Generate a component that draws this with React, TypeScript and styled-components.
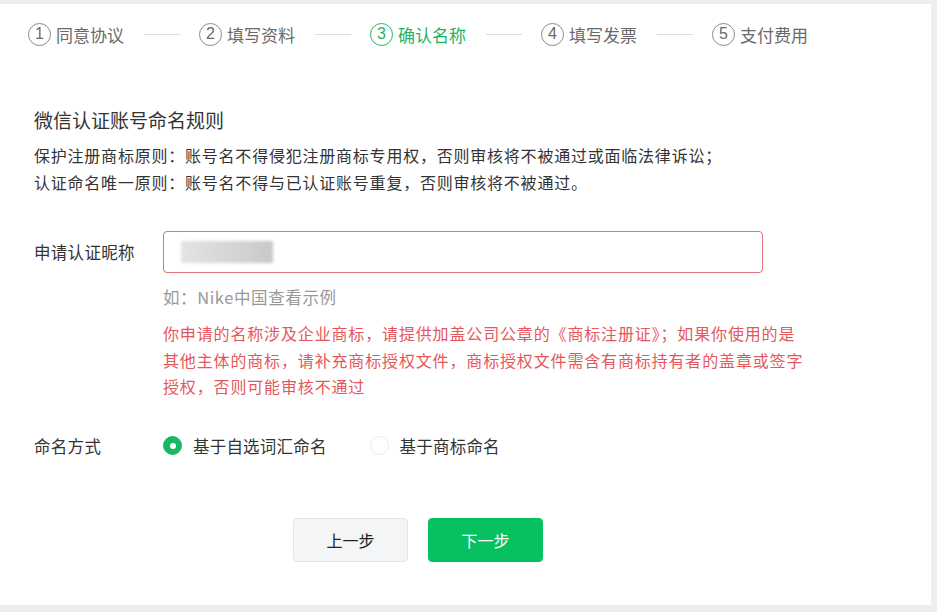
import React, { useState } from 'react'
import styled, { createGlobalStyle } from 'styled-components'

const GlobalStyle = createGlobalStyle`
    html, body {
        margin: 0;
        padding: 0;
        background: #eeeeee;
    }
    body {
        font-family: "Noto Sans CJK SC", "Noto Sans", sans-serif;
        color: #333;
    }
`

const StyledPage = styled.div`
    width: 937px;
    height: 612px;
    padding-top: 4px;
    box-sizing: border-box;
    background: #eeeeee;
`

const StyledCard = styled.div`
    width: 931px;
    height: 601px;
    background: #fff;
    box-sizing: border-box;
    padding: 15px 0 0 34px;
`

const StyledSteps = styled.div`
    display: flex;
    align-items: center;
    height: 30px;
    margin-left: -6px;
`

const StyledStep = styled.div<{ $active?: boolean }>`
    display: flex;
    align-items: center;
    gap: 5px;
    font-size: 17px;
    color: ${p => p.$active ? '#23b26a' : '#6a6a6a'};
`

const StyledCircle = styled.span<{ $active?: boolean }>`
    width: 21px;
    height: 21px;
    border-radius: 50%;
    border: 1px solid ${p => p.$active ? '#23b26a' : '#8a8a8a'};
    display: flex;
    align-items: center;
    justify-content: center;
    font-family: "Liberation Sans", Arial, sans-serif;
    font-size: 16px;
    line-height: 1;
`

const StyledLine = styled.span`
    width: 36px;
    height: 1px;
    background: #dcdcdc;
    margin: 0 19px 0 20px;
`

const StyledTitle = styled.h2`
    margin: 58px 0 0;
    font-size: 19px;
    font-weight: normal;
    line-height: 26px;
    color: #333;
`

const StyledRules = styled.div`
    margin-top: 9px;
    font-size: 16px;
    line-height: 27px;
    color: #333;
    letter-spacing: 0.78px;
`

const StyledFormRow = styled.div<{ $top: number }>`
    display: flex;
    align-items: flex-start;
    margin-top: ${p => p.$top}px;
`

const StyledLabel = styled.div<{ $height: number }>`
    width: 129px;
    flex-shrink: 0;
    font-size: 16.5px;
    line-height: ${p => p.$height}px;
    letter-spacing: 0.3px;
    color: #333;
`

const StyledField = styled.div`
    display: flex;
    flex-direction: column;
`

const StyledInput = styled.div`
    width: 600px;
    height: 42px;
    box-sizing: border-box;
    border: 1px solid #e2737b;
    border-radius: 4px;
    display: flex;
    align-items: center;
    padding-left: 17px;
`

const StyledBlur = styled.div`
    width: 92px;
    height: 22px;
    background: linear-gradient(90deg, #e4e4e4, #d8d8d8 40%, #d2d2d2 70%, #c8c8c8);
    filter: blur(1.5px);
`

const StyledHint = styled.div`
    margin-top: 12px;
    font-size: 16.5px;
    line-height: 24px;
    letter-spacing: 0.6px;
    color: #999;
`

const StyledWarning = styled.div`
    margin-top: 11px;
    font-size: 16px;
    line-height: 26.5px;
    color: #e5575c;
    letter-spacing: 0.85px;
`

const StyledRadioGroup = styled.div`
    display: flex;
    align-items: center;
    height: 24px;
`

const StyledRadio = styled.label`
    display: flex;
    align-items: center;
    gap: 11px;
    font-size: 16.5px;
    letter-spacing: 0.2px;
    color: #333;
    margin-right: 43px;
    cursor: pointer;
`

const StyledDot = styled.span<{ $checked?: boolean }>`
    width: 19px;
    height: 19px;
    border-radius: 50%;
    box-sizing: border-box;
    border: 1px solid ${p => p.$checked ? '#17b865' : '#ececec'};
    background: ${p => p.$checked ? '#17b865' : '#fff'};
    display: flex;
    align-items: center;
    justify-content: center;
    &::after {
        content: '';
        width: 6px;
        height: 6px;
        border-radius: 50%;
        background: ${p => p.$checked ? '#fff' : 'transparent'};
    }
`

const StyledButtons = styled.div`
    display: flex;
    gap: 20px;
    margin: 60px 0 0 259px;
`

const StyledButton = styled.button<{ $primary?: boolean }>`
    width: 115px;
    height: 44px;
    border-radius: 4px;
    font-family: inherit;
    font-size: 16px;
    cursor: pointer;
    border: 1px solid ${p => p.$primary ? '#07c160' : '#e3e4e6'};
    background: ${p => p.$primary ? '#07c160' : '#f4f5f7'};
    color: ${p => p.$primary ? '#fff' : '#222'};
`

const steps = ['同意协议', '填写资料', '确认名称', '填写发票', '支付费用']

const App = () => {
    const [mode, setMode] = useState<number>(0)
    const current = 2

    return (
        <StyledPage>
            <GlobalStyle />
            <StyledCard>
                <StyledSteps>
                    {steps.map((step, index) => {
                        return (
                            <React.Fragment key={index}>
                                <StyledStep $active={index === current}>
                                    <StyledCircle $active={index === current}>{index + 1}</StyledCircle>
                                    {step}
                                </StyledStep>
                                {index < steps.length - 1 && <StyledLine />}
                            </React.Fragment>
                        )
                    })}
                </StyledSteps>

                <StyledTitle>微信认证账号命名规则</StyledTitle>
                <StyledRules>
                    保护注册商标原则：账号名不得侵犯注册商标专用权，否则审核将不被通过或面临法律诉讼；<br />
                    认证命名唯一原则：账号名不得与已认证账号重复，否则审核将不被通过。
                </StyledRules>

                <StyledFormRow $top={35}>
                    <StyledLabel $height={42}>申请认证昵称</StyledLabel>
                    <StyledField>
                        <StyledInput>
                            <StyledBlur />
                        </StyledInput>
                        <StyledHint>如：Nike中国查看示例</StyledHint>
                        <StyledWarning>
                            你申请的名称涉及企业商标，请提供加盖公司公章的《商标注册证》；如果你使用的是<br />
                            其他主体的商标，请补充商标授权文件，商标授权文件需含有商标持有者的盖章或签字<br />
                            授权，否则可能审核不通过
                        </StyledWarning>
                    </StyledField>
                </StyledFormRow>

                <StyledFormRow $top={34}>
                    <StyledLabel $height={24}>命名方式</StyledLabel>
                    <StyledRadioGroup>
                        <StyledRadio onClick={() => setMode(0)}>
                            <StyledDot $checked={mode === 0} />
                            基于自选词汇命名
                        </StyledRadio>
                        <StyledRadio onClick={() => setMode(1)}>
                            <StyledDot $checked={mode === 1} />
                            基于商标命名
                        </StyledRadio>
                    </StyledRadioGroup>
                </StyledFormRow>

                <StyledButtons>
                    <StyledButton>上一步</StyledButton>
                    <StyledButton $primary>下一步</StyledButton>
                </StyledButtons>
            </StyledCard>
        </StyledPage>
    )
}

export default App
